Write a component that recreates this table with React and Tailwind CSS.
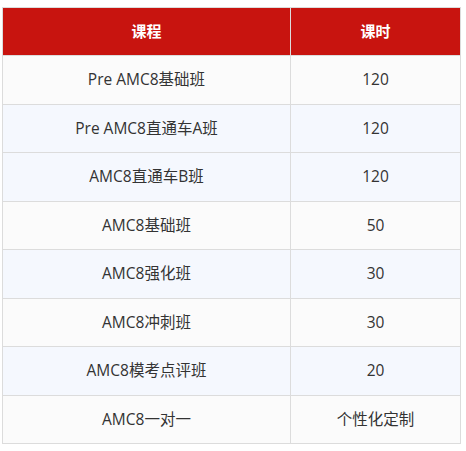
import React from "react";

const rows = [
  ["Pre AMC8基础班", "120", false],
  ["Pre AMC8直通车A班", "120", true],
  ["AMC8直通车B班", "120", true],
  ["AMC8基础班", "50", false],
  ["AMC8强化班", "30", true],
  ["AMC8冲刺班", "30", false],
  ["AMC8模考点评班", "20", true],
  ["AMC8一对一", "个性化定制", false],
];

export default function App() {
  return (
    <div
      className="w-[466px] h-[451px] bg-white pt-[7px] pl-[2px]"
      style={{ fontFamily: '"Open Sans", "Noto Sans CJK SC", sans-serif' }}
    >
      <table className="w-[458px] border-collapse table-fixed text-[15.5px] text-[#333333]">
        <colgroup>
          <col className="w-[288px]" />
          <col className="w-[170px]" />
        </colgroup>
        <thead>
          <tr className="h-[48px] bg-[#c8140f] text-white font-bold text-[15px]">
            <th className="border border-[#dcdcdc] text-center">课程</th>
            <th className="border border-[#dcdcdc] text-center">课时</th>
          </tr>
        </thead>
        <tbody>
          {rows.map(([name, hours, blue]) => (
            <tr
              key={name}
              className={blue ? "h-[48.5px] bg-[#f5f8fe]" : "h-[48.5px] bg-[#fbfbfb]"}
            >
              <td className="border border-[#dcdcdc] text-center">{name}</td>
              <td className="border border-[#dcdcdc] text-center">{hours}</td>
            </tr>
          ))}
        </tbody>
      </table>
    </div>
  );
}
